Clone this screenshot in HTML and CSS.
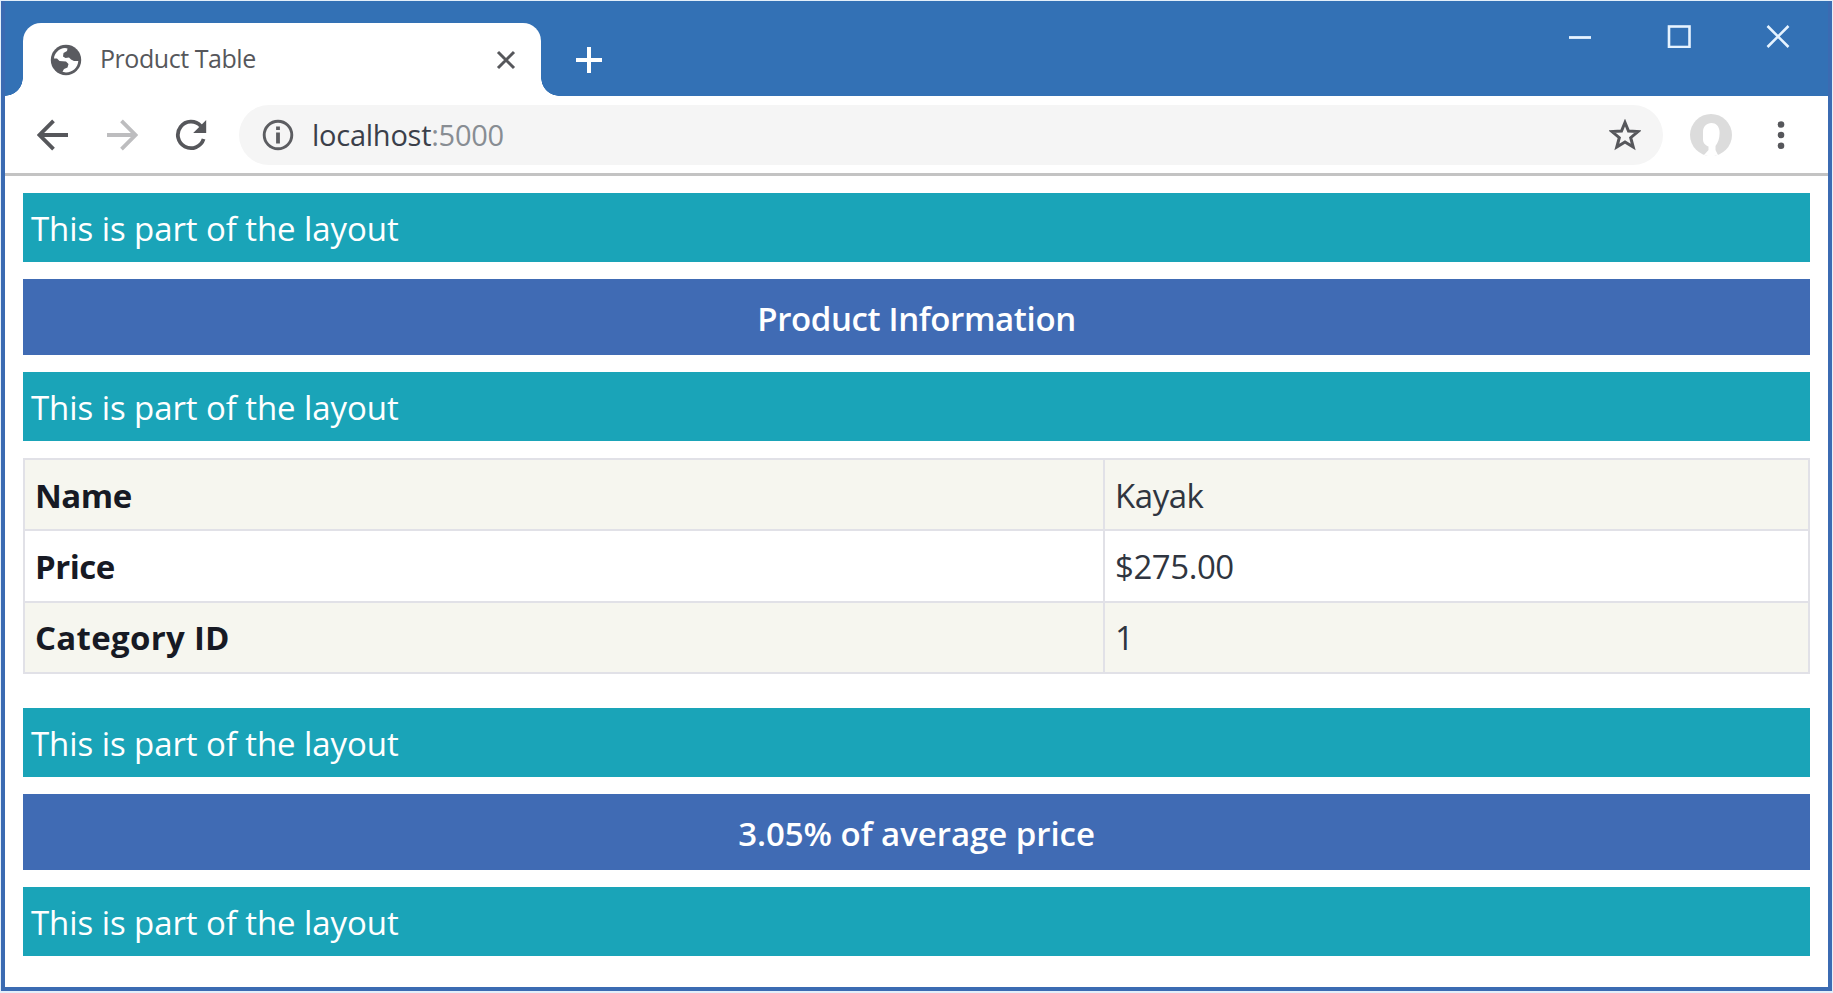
FILE: index.html
```html
<!DOCTYPE html>
<html lang="en">
<head>
<meta charset="utf-8">
<title>Product Table</title>
<link rel="stylesheet" href="styles.css">
</head>
<body>
<div class="window">
  <header class="titlebar">
    <div class="tab">
      <svg class="globe" width="32" height="32" viewBox="0 0 32 32"><circle cx="16" cy="16" r="15.2" fill="#5a5b60"/><path d="M4 14.500C4.300 9 9 4.400 15 3.900L17.500 4.500 17 7 13.500 9 13 12.500 15.500 14 19 13.500 21 15.500 24 17 28.300 17C28 23.500 22.500 28.400 16 28.400L12.500 27.800 14 25 17.500 23.500 18.500 20 16 17.500 9.500 17 7 14.500Z" fill="#fff"/></svg>
      <span class="tab-title">Product Table</span>
      <svg class="tab-close" width="20" height="20" viewBox="0 0 20 20"><path d="M2 2L18 18M18 2L2 18" stroke="#56575b" stroke-width="3"/></svg>
    </div>
    <svg class="new-tab" width="28" height="28" viewBox="0 0 28 28"><path d="M14 1V27M1 14H27" stroke="#fff" stroke-width="4"/></svg>
    <div class="controls">
      <svg width="24" height="24" viewBox="0 0 24 24"><path d="M1 13.500H23" stroke="#e6f3ff" stroke-width="2.800"/></svg>
      <svg width="24" height="24" viewBox="0 0 24 24"><rect x="2" y="2.500" width="20.500" height="20.500" fill="none" stroke="#e6f3ff" stroke-width="2.600"/></svg>
      <svg width="24" height="24" viewBox="0 0 24 24"><path d="M1.500 2L22.500 23M22.500 2L1.500 23" stroke="#e6f3ff" stroke-width="2.600"/></svg>
    </div>
  </header>
  <nav class="toolbar">
    <svg width="32" height="32" viewBox="0 0 32 32"><path d="M31 16H3M16.500 1.800L2.500 16L16.500 30.200" fill="none" stroke="#56575b" stroke-width="3.800"/></svg>
    <svg width="32" height="32" viewBox="0 0 32 32"><path d="M1 16H29M15.500 1.800L29.500 16L15.500 30.200" fill="none" stroke="#bdbdbf" stroke-width="3.800"/></svg>
    <svg width="32" height="32" viewBox="0 0 32 32"><path d="M25.800 7A13.200 13.200 0 1 0 28.600 20" fill="none" stroke="#56575b" stroke-width="3.800"/><path d="M31.200 1V14H18.200Z" fill="#56575b"/></svg>
    <div class="address">
      <svg width="32" height="32" viewBox="0 0 32 32"><circle cx="16" cy="16" r="13.800" fill="none" stroke="#5c5d61" stroke-width="2.900"/><path d="M16 7.500V11M16 13.500V24.500" stroke="#5c5d61" stroke-width="3.800"/></svg>
      <span class="url"><span class="host">localhost</span><span class="port">:5000</span></span>
      <svg class="star" width="32" height="32" viewBox="0 0 32 32"><path d="M16 3.500L19.500 12L29 12.600L21.700 18.700L24.200 28L16 22.900L7.800 28L10.300 18.700L3 12.600L12.500 12Z" fill="none" stroke="#56575b" stroke-width="3"/></svg>
    </div>
    <svg class="avatar" width="42" height="42" viewBox="0 0 42 42"><circle cx="21" cy="21" r="21" fill="#dcdcdc"/><path d="M21.500 9C16.500 9 13 12.500 13 18V25C13 29 15 31 18.500 32.500V36L14 41Q21 43.500 28 41L25.500 36V32C28.500 28 30 23 29.500 17C29 12 26 9 21.500 9Z" fill="#fff"/></svg>
    <svg class="menu" width="8" height="32" viewBox="0 0 8 32"><g fill="#56575b"><circle cx="4" cy="5.500" r="3.300"/><circle cx="4" cy="16" r="3.300"/><circle cx="4" cy="26.800" r="3.300"/></g></svg>
  </nav>
  <main class="page">
    <div class="layout-bar">This is part of the layout</div>
    <div class="heading title">Product Information</div>
    <div class="layout-bar">This is part of the layout</div>
    <table class="details">
      <tbody>
        <tr><th class="tight">Name</th><td>Kayak</td></tr>
        <tr><th class="tight">Price</th><td>$275.00</td></tr>
        <tr><th class="wide">Category ID</th><td>1</td></tr>
      </tbody>
    </table>
    <div class="layout-bar">This is part of the layout</div>
    <div class="heading">3.05% of average price</div>
    <div class="layout-bar">This is part of the layout</div>
  </main>
</div>
</body>
</html>
```
FILE: styles.css
```css
* { box-sizing: border-box; }
body {
  margin: 0;
  padding: 1px 1px 2px;
  height: 993px;
  background: #e3effa;
  font-family: "Open Sans", "Noto Sans", sans-serif;
  overflow: hidden;
}
svg { display: block; flex: none; }
.window {
  height: 990px;
  border: 4px solid #3b6bb2;
  border-top: 0;
  background: #fff;
}
.titlebar {
  height: 95px;
  background: #3371b5;
  display: flex;
  align-items: flex-start;
}
.tab {
  position: relative;
  width: 518px;
  height: 73px;
  margin: 22px 0 0 18px;
  padding: 0 25px 0 27px;
  background: #fff;
  border-radius: 18px 18px 0 0;
  display: flex;
  align-items: center;
}
.tab::before, .tab::after {
  content: "";
  position: absolute;
  bottom: 0;
  width: 18px;
  height: 18px;
}
.tab::before {
  left: -18px;
  background: radial-gradient(circle at 0 0, transparent 17.500px, #fff 18px);
}
.tab::after {
  right: -18px;
  background: radial-gradient(circle at 100% 0, transparent 17.500px, #fff 18px);
}
.tab-title {
  flex: 1;
  margin-left: 18px;
  padding-bottom: 3px;
  font-size: 25px;
  line-height: 34px;
  letter-spacing: -0.450px;
  color: #56575b;
  white-space: nowrap;
}
.new-tab { margin: 45px 0 0 34px; }
.controls {
  margin: 23px 38px 0 auto;
  display: flex;
  gap: 75px;
}
.toolbar {
  height: 80px;
  padding: 1px 43px 0 32px;
  border-bottom: 3px solid #c3c3c3;
  display: flex;
  align-items: center;
}
.toolbar > svg + svg { margin-left: 37px; }
.address {
  flex: 1;
  height: 60px;
  margin: 0 27px 0 32px;
  padding: 0 22px 0 23px;
  border-radius: 30px;
  background: #f5f5f5;
  display: flex;
  align-items: center;
}
.url {
  flex: 1;
  margin-left: 18px;
  font-size: 29px;
  line-height: 40px;
  letter-spacing: -0.250px;
  color: #3b3f4a;
}
.port { color: #888d93; }
.toolbar > .menu.menu { margin-left: 45px; }
.page { padding: 17px 18px 0; }
.layout-bar {
  height: 69px;
  margin-bottom: 17px;
  padding-left: 8px;
  background: #1aa4b8;
  color: #fff;
  font-size: 33px;
  line-height: 71px;
  letter-spacing: -0.080px;
  white-space: nowrap;
}
.heading {
  height: 76px;
  margin-bottom: 17px;
  background: #406bb4;
  color: #fff;
  font-size: 33px;
  font-weight: 600;
  line-height: 80px;
  letter-spacing: -0.050px;
  text-align: center;
}
.heading.title { letter-spacing: -0.370px; }
.details {
  width: 100%;
  height: 216px;
  margin-bottom: 34px;
  border-collapse: collapse;
  table-layout: fixed;
  font-size: 33px;
  line-height: 44px;
  color: #2f3540;
}
.details th, .details td {
  border: 2px solid #e1e1e7;
  padding: 2px 10px 0;
  text-align: left;
}
.details td { letter-spacing: -0.450px; }
.details th { width: 1080px; color: #171a24; font-weight: 700; }
.details th.tight { letter-spacing: -0.500px; }
.details th.wide { letter-spacing: 0.300px; }
.details tr:nth-child(odd) { background: #f6f6ef; }
```
